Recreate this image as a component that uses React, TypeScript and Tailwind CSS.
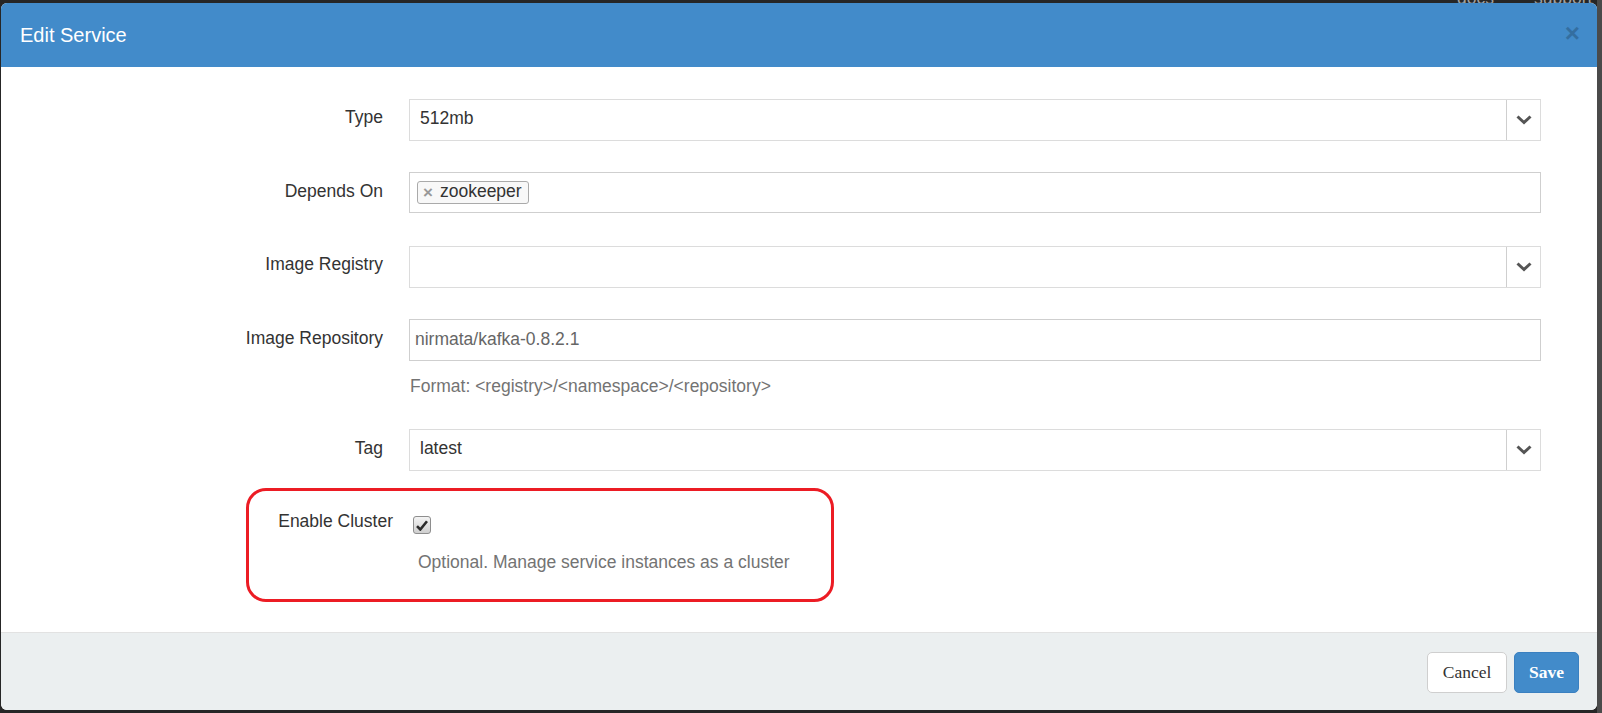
import React from "react";

const Chevron = () => (
  <svg width="16" height="10" viewBox="0 0 16 10" fill="none">
    <path d="M1.5 1.5 L8 7.5 L14.5 1.5" stroke="#555" strokeWidth="3" />
  </svg>
);

function Label({ children, className = "" }: { children: React.ReactNode; className?: string }) {
  return (
    <div className={"w-[382px] shrink-0 text-right text-[#333] text-[17.5px] leading-[25px] " + className}>
      {children}
    </div>
  );
}

function SelectBox({ value }: { value: string }) {
  return (
    <div className="ml-[26px] w-[1132px] h-[42px] border border-[#dcdcdc] flex items-stretch bg-white">
      <div className="flex-1 flex items-center pl-[10px] pb-[4px] text-[17.5px] text-[#333]">{value}</div>
      <div className="w-[34px] border-l border-[#cfcfcf] flex items-center justify-center">
        <Chevron />
      </div>
    </div>
  );
}

export default function App() {
  return (
    <div
      className="relative w-[1602px] h-[713px] bg-[#262626] overflow-hidden"
      style={{ fontFamily: '"Liberation Sans", Arial, sans-serif' }}
    >
      <div className="absolute top-[-15px] left-[1457px] text-[17.5px] text-[#a0a0a0] whitespace-nowrap flex gap-[40px]">
        <span>docs</span>
        <span>support</span>
      </div>
      <div className="absolute top-0 right-0 w-[5px] h-[713px] bg-[#4a4a4a]" />
      <div className="relative z-10 ml-[1px] mt-[3px] w-[1596px] h-[707px] rounded-[6px] overflow-hidden bg-white flex flex-col">
        {/* Header */}
        <div className="h-[64px] shrink-0 bg-[#428bca] flex items-center justify-between pl-[19px] pr-[17px]">
          <div className="text-white text-[20px] leading-none pb-[1px]">Edit Service</div>
          <div className="text-black opacity-20 font-bold text-[26px] leading-none pb-[4px]">×</div>
        </div>

        {/* Body */}
        <div className="relative flex-1 flex flex-col pt-[32px]">
          {/* Type */}
          <div className="flex items-start">
            <Label className="pt-[6px]">Type</Label>
            <SelectBox value="512mb" />
          </div>

          {/* Depends On */}
          <div className="flex items-start mt-[31px]">
            <Label className="pt-[7px]">Depends On</Label>
            <div className="ml-[26px] w-[1132px] h-[41px] border border-[#cfcfcf] bg-white flex items-start pl-[7px] pt-[8px]">
              <div className="h-[23px] border border-[#aaa] rounded-[3px] bg-[#f8f8f8] flex items-center pl-[5px] pr-[6px] gap-[7px]">
                <span className="text-[#999] font-bold text-[17px] leading-none pb-[1px]">×</span>
                <span className="text-[#333] text-[17.5px] leading-none pb-[2px]">zookeeper</span>
              </div>
            </div>
          </div>

          {/* Image Registry */}
          <div className="flex items-start mt-[33px]">
            <Label className="pt-[6px]">Image Registry</Label>
            <SelectBox value="" />
          </div>

          {/* Image Repository */}
          <div className="flex items-start mt-[31px]">
            <Label className="pt-[7px]">Image Repository</Label>
            <div className="ml-[26px] w-[1132px] flex flex-col">
              <div className="h-[42px] border border-[#cfcfcf] bg-white flex items-center pl-[5px] pb-[1px] text-[17.5px] text-[#666]">
                nirmata/kafka-0.8.2.1
              </div>
              <div className="mt-[13px] h-[25px] leading-[25px] text-[17.5px] text-[#737373] pl-[1px]">
                Format: &lt;registry&gt;/&lt;namespace&gt;/&lt;repository&gt;
              </div>
            </div>
          </div>

          {/* Tag */}
          <div className="flex items-start mt-[30px]">
            <Label className="pt-[7px]">Tag</Label>
            <SelectBox value="latest" />
          </div>

          {/* Enable Cluster */}
          <div className="flex items-start mt-[38px]">
            <Label className="w-[392px]">Enable Cluster</Label>
            <div className="ml-[20px] flex flex-col">
              <div className="mt-[7px] w-[18px] h-[18px] rounded-[3px] border border-[#8e8e8e] bg-gradient-to-b from-[#f4f4f4] to-[#cfcfcf] flex items-center justify-center">
                <svg width="12" height="11" viewBox="0 0 12 11">
                  <path d="M1 6.2 L4.3 9.5 L11 1.2" stroke="#2b2b2b" strokeWidth="2.6" fill="none" />
                </svg>
              </div>
              <div className="mt-[16px] ml-[5px] leading-[25px] text-[17.5px] text-[#737373] whitespace-nowrap">
                Optional. Manage service instances as a cluster
              </div>
            </div>
          </div>

          {/* Red annotation box */}
          <div className="absolute left-[245px] top-[421px] w-[588px] h-[114px] border-[3px] border-[#ec1c24] rounded-[20px] pointer-events-none" />
        </div>

        {/* Footer */}
        <div className="h-[78px] shrink-0 border-t border-[#e2e2e2] bg-[#ebeff0] flex items-center justify-end gap-[7px] pr-[18px] pt-[1px]">
          <button
            className="w-[80px] h-[41px] rounded-[5px] border border-[#cfcfcf] bg-white text-[#333] text-[17.5px]"
            style={{ fontFamily: '"Liberation Serif", "Times New Roman", serif' }}
          >
            Cancel
          </button>
          <button
            className="w-[65px] h-[41px] rounded-[5px] border border-[#3a80c0] bg-[#428bca] text-white font-bold text-[17.5px]"
            style={{ fontFamily: '"Liberation Serif", "Times New Roman", serif' }}
          >
            Save
          </button>
        </div>
      </div>
    </div>
  );
}
